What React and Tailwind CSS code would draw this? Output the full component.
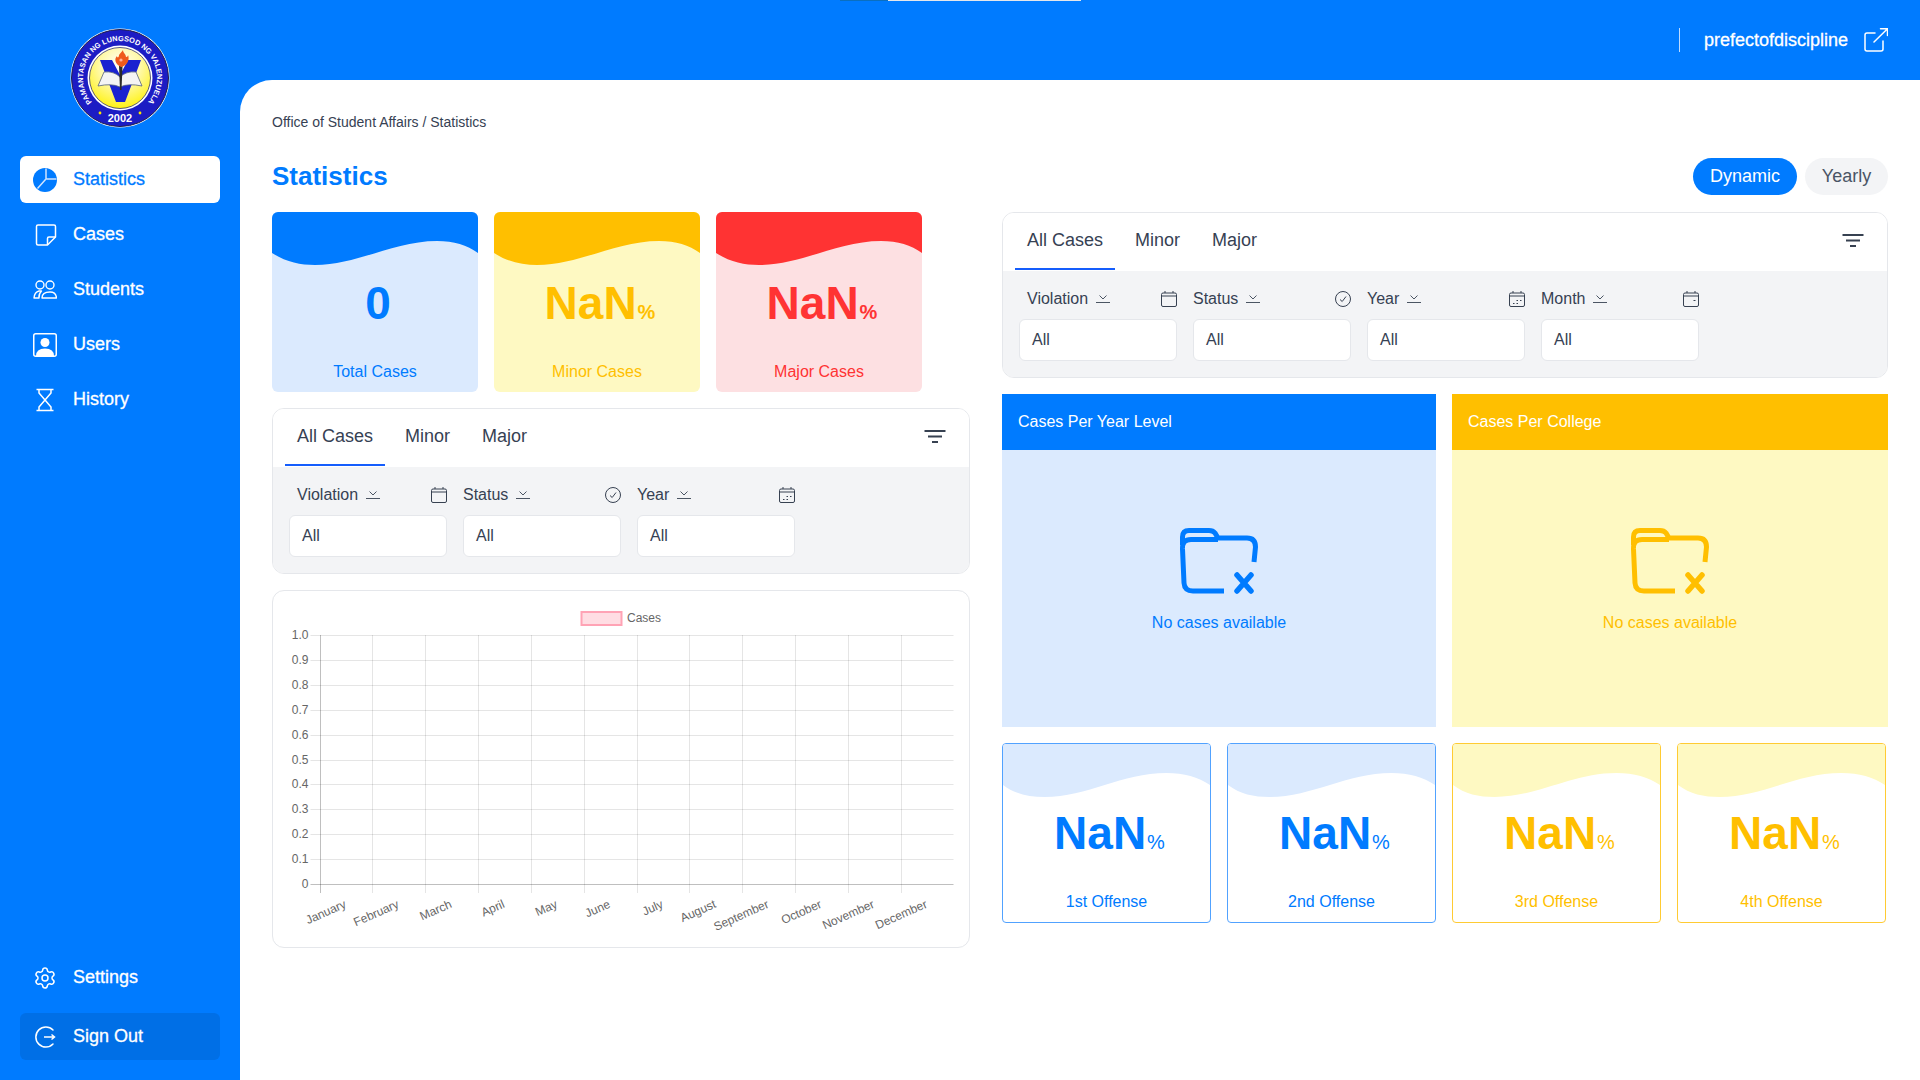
import { Settings } from 'lucide-react';

const months = ['January', 'February', 'March', 'April', 'May', 'June', 'July', 'August', 'September', 'October', 'November', 'December'];
const yTicks = ['1.0', '0.9', '0.8', '0.7', '0.6', '0.5', '0.4', '0.3', '0.2', '0.1', '0'];

function Logo() {
  return (
    <svg viewBox="0 0 100 100" className="w-[100px] h-[100px]">
      <defs>
        <path id="ringTop" d="M21.7 73.8 A37 37 0 1 1 78.3 73.8" />
        <radialGradient id="seal" cx="50%" cy="30%" r="75%">
          <stop offset="0%" stopColor="#ffffff" />
          <stop offset="45%" stopColor="#fff9a8" />
          <stop offset="100%" stopColor="#fff200" />
        </radialGradient>
      </defs>
      <circle cx="50" cy="50" r="49.5" fill="#ffffff" />
      <circle cx="50" cy="50" r="48.5" fill="#1c1cc4" stroke="#20204a" strokeWidth="1" />
      <circle cx="50" cy="50" r="32.5" fill="#ffffff" />
      <circle cx="50" cy="50" r="30.5" fill="url(#seal)" stroke="#151560" strokeWidth="0.7" />
      <text fill="#ffffff" fontSize="7.4" fontWeight="700" fontFamily="Liberation Sans, sans-serif">
        <textPath href="#ringTop" startOffset="50%" textAnchor="middle">PAMANTASAN NG LUNGSOD NG VALENZUELA</textPath>
      </text>
      <text x="50" y="93.5" textAnchor="middle" fill="#ffffff" fontSize="11" fontWeight="700" fontFamily="Liberation Sans, sans-serif">2002</text>
      <circle cx="30" cy="85" r="1.4" fill="#ffe600" />
      <circle cx="70" cy="85" r="1.4" fill="#ffe600" />
      <path d="M30 32 H42 L50 47 L58 32 H71 L55 74 H46 Z" fill="#1a22d0" />
      <path d="M28 58 L34 44 Q44 43 50 49 Q56 43 66 44 L72 58 Q58 55 50 59 Q42 55 28 58 Z" fill="#f4f4f4" stroke="#56627a" strokeWidth="0.8" />
      <path d="M49 38 H52.5 L51.5 62 H50 Z" fill="#2a2a2a" />
      <g transform="translate(1 3)">
        <path d="M50 36 C44 33 43 28 46 25 C46 27 48 27 48 24 C49 22 51 21 52 19 C52 22 55 23 55 26 C57 26 57 24 57 24 C59 29 56 34 51 36 Z" fill="#ef5a1c" />
        <circle cx="50" cy="29" r="1.6" fill="#ffb199" />
      </g>
    </svg>
  );
}

function PieIcon() {
  return (
    <svg viewBox="0 0 24 24" className="w-6 h-6">
      <circle cx="12" cy="12" r="12" fill="#007bff" />
      <path d="M13 0.5 V11 H23.5 M12.5 11.5 L4.5 20.5" fill="none" stroke="#cfe4ff" strokeWidth="1.5" />
    </svg>
  );
}

function NoteIcon() {
  return (
    <svg viewBox="0 0 24 24" className="w-6 h-6" fill="none" stroke="#ffffff" strokeWidth="1.5" strokeLinejoin="round">
      <path d="M3.5 3.5 Q3.5 2 5 2 H21 Q22.5 2 22.5 3.5 V14 L14.5 22 H5 Q3.5 22 3.5 20.5 Z" />
      <path d="M22.5 14 H16 Q14.5 14 14.5 15.5 V22" />
    </svg>
  );
}

function PeopleIcon() {
  return (
    <svg viewBox="0 0 24 24" className="w-6 h-6" fill="none" stroke="#ffffff" strokeWidth="1.4" strokeLinejoin="round">
      <circle cx="7" cy="7" r="4" />
      <circle cx="17" cy="7" r="4" />
      <path d="M1 20 Q1.5 14 6 13 H8.5 Q5.5 16 6 20 Z" />
      <path d="M9 20 Q9 14 17 14 Q23 14 23.5 20 Z" />
    </svg>
  );
}

function UserCardIcon() {
  return (
    <svg viewBox="0 0 24 24" className="w-6 h-6">
      <rect x="0.75" y="0.75" width="22.5" height="22.5" rx="2" fill="none" stroke="#ffffff" strokeWidth="1.5" />
      <circle cx="12" cy="9.5" r="4.5" fill="#ffffff" />
      <path d="M3 23 Q3 15.5 12 15.5 Q21 15.5 21 23 Z" fill="#ffffff" />
    </svg>
  );
}

function HourglassIcon() {
  return (
    <svg viewBox="0 0 24 24" className="w-6 h-6" fill="none" stroke="#ffffff" strokeWidth="1.5">
      <path d="M3.5 1.5 H20.5 M3.5 22.5 H20.5" />
      <path d="M6 1.5 V5 L12 12 L6 19 V22.5 M18 1.5 V5 L12 12 L18 19 V22.5" />
    </svg>
  );
}

function SignOutIcon() {
  return (
    <svg viewBox="0 0 24 24" className="w-6 h-6" fill="none" stroke="#ffffff" strokeWidth="1.5">
      <path d="M20 5 A10 10 0 1 0 20 19" strokeLinecap="round" />
      <path d="M11 12 H21 M18.5 9.5 L21.5 12 L18.5 14.5" />
    </svg>
  );
}

function OpenIcon() {
  return (
    <svg viewBox="0 0 24 24" className="w-6 h-6" fill="none" stroke="#ffffff" strokeWidth="1.5" strokeLinecap="round">
      <path d="M11 5 H3 Q1 5 1 7 V21 Q1 23 3 23 H17 Q19 23 19 21 V13" />
      <path d="M10 14 L23.5 0.75 M16.5 0.75 H23.5 V7.5" />
    </svg>
  );
}

function FilterIcon() {
  return (
    <svg width="22" height="13" viewBox="0 0 22 13" fill="none" stroke="#374151" strokeWidth="2">
      <path d="M0.5 1 H21.5 M4 6.5 H18 M8 12 H14" />
    </svg>
  );
}

function Chevron() {
  return (
    <svg width="14" height="8" viewBox="0 0 14 8" fill="none" stroke="#4b5563" strokeWidth="1">
      <path d="M3.5 0.5 L7 4 L10.5 0.5 M0 7.5 H14" />
    </svg>
  );
}

function FieldIcon({ type }) {
  return (
    <svg width="16" height="16" viewBox="0 0 16 16" fill="none" stroke="#374151" strokeWidth="1">
      {type === 'check' ? (
        <>
          <circle cx="8" cy="8" r="7.5" />
          <path d="M5 8.5 L7.2 10.5 L11 5.5" />
        </>
      ) : (
        <>
          <rect x="0.5" y="2" width="15" height="13.5" rx="1.5" />
          <path d="M0.5 5 H15.5 M4 0 V2 M12 0 V2" />
          {type === 'year' && <path d="M4 12.5 H5.5 M7.5 12.5 H9 M7.5 9.5 H9 M11 9.5 H12.5" />}
          {type === 'month' && <path d="M10.5 9.5 H12.5" />}
        </>
      )}
    </svg>
  );
}

function FolderIcon({ color }) {
  return (
    <svg width="80" height="66" viewBox="0 0 78 66" fill="none" stroke={color} strokeWidth="5">
      <path d="M2.5 17 V9 Q2.5 2.5 9 2.5 H29 Q33 2.5 35 5 L38 10 H67 Q75.5 10 75.5 19 L74 34" />
      <path d="M2.5 21 Q2 11.5 11 11.5 H38 M2.5 21 L4 55 Q4.5 63 13 63 H44" />
      <path d="M57 47 L71 63 M71 47 L57 63" strokeWidth="5.5" strokeLinecap="round" />
    </svg>
  );
}

function NavItem({ icon, label, active, dark }) {
  return (
    <div className={`flex items-center gap-4 h-[47px] px-[13px] rounded-md text-lg [-webkit-text-stroke:0.3px] ${active ? 'bg-white text-[#007bff]' : dark ? 'bg-[#006fe6] text-white' : 'text-white'}`}>
      {icon}
      <span className="pb-[2px]">{label}</span>
    </div>
  );
}

function FilterCard({ fields }) {
  return (
    <div className="border border-gray-200 rounded-xl overflow-hidden">
      <div className="flex justify-between h-[58px] pl-3 pr-[23px] bg-white">
        <div className="flex gap-2 text-lg text-gray-700">
          <div className="px-3 h-[57px] pb-[2px] flex items-center border-b-2 border-blue-600">All Cases</div>
          <div className="px-3 h-[57px] pb-[3px] flex items-center">Minor</div>
          <div className="px-3 h-[57px] pb-[3px] flex items-center">Major</div>
        </div>
        <div className="pt-[21px]"><FilterIcon /></div>
      </div>
      <div className="flex gap-4 bg-gray-100 px-4 pt-4 pb-4">
        {fields.map((f, i) => (
          <div key={f.label} className="w-[158px]">
            <div className={`flex items-center h-6 text-gray-700 mb-2 ${i === 0 ? 'pl-2' : ''}`}>
              <span>{f.label}</span>
              <span className="ml-2 mr-auto"><Chevron /></span>
              <FieldIcon type={f.icon} />
            </div>
            <div className="h-[42px] pb-px bg-white border border-gray-200 rounded-md px-3 flex items-center text-gray-700">All</div>
          </div>
        ))}
      </div>
    </div>
  );
}

function StatCard({ value, percent, label, solid, soft, text }) {
  return (
    <div className={`relative w-[206px] h-[180px] rounded-md overflow-hidden ${soft}`}>
      <svg viewBox="0 0 206 60" className={`absolute top-0 left-0 w-[206px] h-[60px] ${solid}`}>
        <path d="M0 41 C14 50 28 53 43 53 C85 53 122 29 165 29 C182 29 195 33 206 41 V0 H0 Z" fill="currentColor" />
      </svg>
      <div className={`relative h-full flex flex-col items-center ${text}`}>
        <div className="mt-[63px] h-14 pl-[6px] flex items-baseline justify-center font-bold text-[46px] leading-[56px]">
          {value}
          {percent && <span className="text-xl ml-px">%</span>}
        </div>
        <div className="mt-auto mb-2 leading-6">{label}</div>
      </div>
    </div>
  );
}

function OffenseCard({ label, border, soft, text }) {
  return (
    <div className={`relative h-[180px] rounded-sm overflow-hidden bg-white border ${border}`}>
      <svg viewBox="0 0 209 56" className={`absolute top-0 left-0 w-full h-14 ${soft}`} preserveAspectRatio="none">
        <path d="M0 41 C12 50 26 53 42 53 C85 53 120 29 165 29 C183 29 197 33 209 41 V0 H0 Z" fill="currentColor" />
      </svg>
      <div className={`relative h-full flex flex-col items-center ${text}`}>
        <div className="mt-[61px] h-14 pl-[6px] flex items-baseline justify-center font-bold text-[46px] leading-[56px]">
          NaN<span className="text-xl font-normal ml-px">%</span>
        </div>
        <div className="mt-auto mb-2 leading-6">{label}</div>
      </div>
    </div>
  );
}

function EmptyPanel({ title, head, body, text, color }) {
  return (
    <div className={`h-[333px] flex flex-col ${body}`}>
      <div className={`h-14 flex items-center px-4 text-white ${head}`}>{title}</div>
      <div className={`flex-1 flex flex-col items-center pt-[78px] ${text}`}>
        <FolderIcon color={color} />
        <div className="mt-[17px] leading-6">No cases available</div>
      </div>
    </div>
  );
}

function Chart() {
  const left = 46.5;
  const right = 680.5;
  const top = 44;
  const bottom = 293;
  const stepX = (right - left) / 12;
  const stepY = (bottom - top) / 10;
  return (
    <div className="h-[358px] border border-gray-200 rounded-xl">
      <svg width="696" height="356" className="block font-['Liberation_Sans',sans-serif]">
        <rect x="308.5" y="21" width="40" height="13" fill="#ffdde3" stroke="#ffa3b5" strokeWidth="2" />
        <text x="354" y="31" fontSize="12" fill="#666666">Cases</text>
        {yTicks.map((t, i) => {
          const y = Math.round(top + i * stepY) + 0.5;
          return (
            <g key={t}>
              <line x1={left - 9} x2={right} y1={y} y2={y} stroke={i === 10 ? 'rgba(0,0,0,0.25)' : 'rgba(0,0,0,0.1)'} />
              <text x={left - 11} y={y + 3} fontSize="12" fill="#666666" textAnchor="end">{t}</text>
            </g>
          );
        })}
        {months.map((m, i) => {
          const x = Math.round(left + i * stepX) + 0.5;
          const cx = left + (i + 0.5) * stepX + 1;
          return (
            <g key={m}>
              <line x1={x} x2={x} y1={top} y2={bottom + 9} stroke={i === 0 ? 'rgba(0,0,0,0.25)' : 'rgba(0,0,0,0.1)'} />
              <text transform={`translate(${cx} 316) rotate(-24)`} fontSize="12" fill="#666666" textAnchor="end">{m}</text>
            </g>
          );
        })}
      </svg>
    </div>
  );
}

export default function App() {
  return (
    <div className="relative flex h-screen overflow-hidden bg-[#007bff] font-['Liberation_Sans',sans-serif]">
      {/* Sidebar */}
      <aside className="w-60 shrink-0 flex flex-col px-5 pb-5">
        <div className="flex justify-center pt-7 pb-7"><Logo /></div>
        <nav className="flex flex-col gap-2">
          <NavItem active icon={<PieIcon />} label="Statistics" />
          <NavItem icon={<NoteIcon />} label="Cases" />
          <NavItem icon={<PeopleIcon />} label="Students" />
          <NavItem icon={<UserCardIcon />} label="Users" />
          <NavItem icon={<HourglassIcon />} label="History" />
        </nav>
        <div className="mt-auto flex flex-col gap-3">
          <NavItem icon={<Settings className="w-6 h-6" strokeWidth={1.5} />} label="Settings" />
          <NavItem dark icon={<SignOutIcon />} label="Sign Out" />
        </div>
      </aside>

      <div className="flex-1 flex flex-col min-w-0">
        {/* Header */}
        <header className="h-20 shrink-0 flex items-center justify-end pr-8">
          <div className="w-px h-6 bg-blue-200 mr-6" />
          <span className="text-lg text-white mr-4 [-webkit-text-stroke:0.3px]">prefectofdiscipline</span>
          <OpenIcon />
        </header>

        {/* Content */}
        <main className="flex-1 bg-white rounded-tl-[32px] pl-8 pr-8 pt-[32px]">
          <div className="text-sm leading-5 text-gray-700">Office of Student Affairs / Statistics</div>
          <div className="flex items-center justify-between mt-[21px] mb-[13px] h-[46px]">
            <h1 className="text-[26px] font-bold text-[#007bff]">Statistics</h1>
            <div className="flex gap-2 text-lg">
              <div className="w-[104px] h-[37px] rounded-full bg-[#007bff] text-white flex items-center justify-center">Dynamic</div>
              <div className="w-[83px] h-[37px] rounded-full bg-gray-100 text-gray-600 flex items-center justify-center">Yearly</div>
            </div>
          </div>
          <div className="flex gap-8">
            {/* Left column */}
            <div className="w-[698px] flex flex-col gap-4">
              <div className="flex gap-4">
                <StatCard value="0" label="Total Cases" solid="text-[#007bff]" soft="bg-blue-100" text="text-[#007bff]" />
                <StatCard value="NaN" percent label="Minor Cases" solid="text-[#ffbf00]" soft="bg-yellow-100" text="text-[#ffbf00]" />
                <StatCard value="NaN" percent label="Major Cases" solid="text-[#ff3333]" soft="bg-[#fde0e2]" text="text-[#ff3333]" />
              </div>
              <FilterCard fields={[
                { label: 'Violation', icon: 'cal' },
                { label: 'Status', icon: 'check' },
                { label: 'Year', icon: 'year' },
              ]} />
              <Chart />
            </div>
            {/* Right column */}
            <div className="w-[886px] flex flex-col gap-4">
              <FilterCard fields={[
                { label: 'Violation', icon: 'cal' },
                { label: 'Status', icon: 'check' },
                { label: 'Year', icon: 'year' },
                { label: 'Month', icon: 'month' },
              ]} />
              <div className="grid grid-cols-[434px_436px] gap-4">
                <EmptyPanel title="Cases Per Year Level" head="bg-[#007bff]" body="bg-blue-100" text="text-[#007bff]" color="#007bff" />
                <EmptyPanel title="Cases Per College" head="bg-[#ffbf00]" body="bg-yellow-100" text="text-[#ffbf00]" color="#ffbf00" />
              </div>
              <div className="grid grid-cols-4 gap-4 w-[884px]">
                <OffenseCard label="1st Offense" border="border-blue-400" soft="text-blue-100" text="text-[#007bff]" />
                <OffenseCard label="2nd Offense" border="border-blue-400" soft="text-blue-100" text="text-[#007bff]" />
                <OffenseCard label="3rd Offense" border="border-[#ffcb33]" soft="text-yellow-100" text="text-[#ffbf00]" />
                <OffenseCard label="4th Offense" border="border-[#ffcb33]" soft="text-yellow-100" text="text-[#ffbf00]" />
              </div>
            </div>
          </div>
        </main>
      </div>

      {/* thin strip along the top edge */}
      <div className="absolute top-0 left-[840px] w-12 h-px bg-[#0a6fc0]" />
      <div className="absolute top-0 left-[888px] w-[193px] h-px bg-gray-200" />
    </div>
  );
}
